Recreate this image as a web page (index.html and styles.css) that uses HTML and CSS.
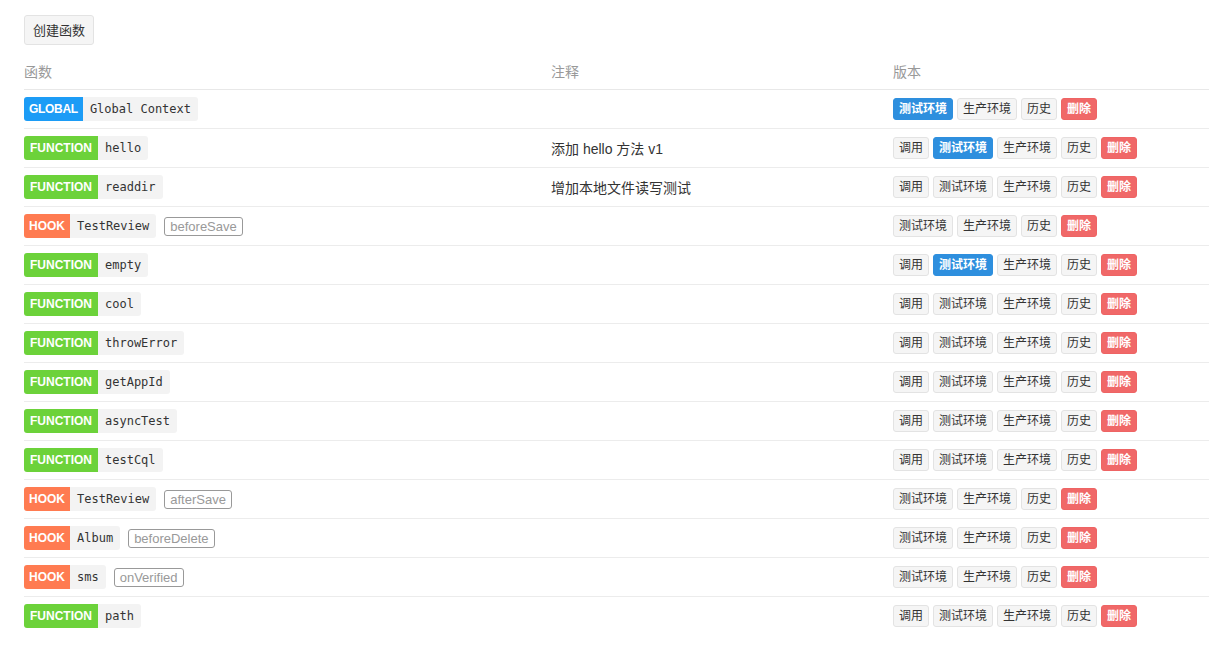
FILE: index.html
```html
<!DOCTYPE html>
<html lang="zh-CN">
<head>
  <meta charset="UTF-8">
  <title>云函数</title>
  <meta name="viewport" content="width=device-width, initial-scale=1">
  <link rel="stylesheet" href="styles.css">
</head>
<body>

  <div class="page">
    <button class="btn btn-create">创建函数</button>

    <table class="func-table">
      <thead>
        <tr>
          <th class="col-name">函数</th>
          <th class="col-note">注释</th>
          <th>版本</th>
        </tr>
      </thead>
      <tbody id="rows"></tbody>
    </table>
  </div>

  <script>
    const funcs = [
      { type: 'GLOBAL', name: 'Global Context', test: true },
      { type: 'FUNCTION', name: 'hello', note: '添加 hello 方法 v1', call: true, test: true },
      { type: 'FUNCTION', name: 'readdir', note: '增加本地文件读写测试', call: true },
      { type: 'HOOK', name: 'TestReview', event: 'beforeSave' },
      { type: 'FUNCTION', name: 'empty', call: true, test: true },
      { type: 'FUNCTION', name: 'cool', call: true },
      { type: 'FUNCTION', name: 'throwError', call: true },
      { type: 'FUNCTION', name: 'getAppId', call: true },
      { type: 'FUNCTION', name: 'asyncTest', call: true },
      { type: 'FUNCTION', name: 'testCql', call: true },
      { type: 'HOOK', name: 'TestReview', event: 'afterSave' },
      { type: 'HOOK', name: 'Album', event: 'beforeDelete' },
      { type: 'HOOK', name: 'sms', event: 'onVerified' },
      { type: 'FUNCTION', name: 'path', call: true }
    ];

    const tbody = document.getElementById('rows');
    funcs.forEach(f => {
      let name = '<span class="tag"><span class="tag-type ' + f.type.toLowerCase() + '">' + f.type + '</span>' +
                 '<code>' + f.name + '</code></span>';
      if (f.event) name += '<span class="event">' + f.event + '</span>';

      let btns = '';
      if (f.call) btns += '<button class="btn btn-sm">调用</button>';
      btns += '<button class="btn btn-sm' + (f.test ? ' btn-primary' : '') + '">测试环境</button>';
      btns += '<button class="btn btn-sm">生产环境</button>';
      btns += '<button class="btn btn-sm">历史</button>';
      btns += '<button class="btn btn-sm btn-danger">删除</button>';

      const tr = document.createElement('tr');
      tr.innerHTML = '<td>' + name + '</td><td>' + (f.note || '') + '</td><td><div class="actions">' + btns + '</div></td>';
      tbody.appendChild(tr);
    });
  </script>

</body>
</html>
```

FILE: styles.css
```css
body { margin: 0; font-family: "Liberation Sans", "Noto Sans CJK SC", sans-serif; font-size: 14px; color: #333; background: #fff; }
.page { padding: 15px 0 0 24px; }

.btn { font-family: inherit; font-size: 13px; color: #333; background: #f5f5f5; border: 1px solid #e3e3e3; border-radius: 3px; cursor: pointer; line-height: 1; }
.btn-create { height: 30px; padding: 0 8px; }

.func-table { width: 100%; border-collapse: collapse; margin-top: 16px; }
.func-table th { text-align: left; font-weight: normal; color: #999; height: 25px; padding: 0 0 3px; vertical-align: top; border-bottom: 1px solid #e8e8e8; }
.func-table td { height: 38px; padding: 0; border-top: 1px solid #ececec; vertical-align: middle; }
.func-table tbody tr:first-child td { border-top: none; }
.col-name { width: 527px; }
.col-note { width: 342px; }

.tag { display: inline-flex; height: 24px; border-radius: 3px; overflow: hidden; vertical-align: middle; }
.tag-type { display: flex; align-items: center; padding: 0 6px; color: #fff; font-weight: bold; font-size: 12px; font-family: "Liberation Sans", sans-serif; }
.tag-type.global { background: #1c9cf6; padding: 0 5px; letter-spacing: -0.3px; }
.tag-type.function { background: #6cd23a; }
.tag-type.hook { background: #ff7b51; padding: 0 5px; }
.tag code { display: flex; align-items: center; padding: 0 7px; background: #f3f3f3; font-family: "DejaVu Sans Mono", monospace; font-size: 12px; color: #333; }

.event { display: inline-flex; align-items: center; box-sizing: border-box; height: 19px; padding: 0 5px; margin-left: 8px; border: 1px solid #999; border-radius: 3px; color: #999; font-size: 13px; vertical-align: middle; }

.actions { display: flex; gap: 4px; }
.btn-sm { height: 22px; padding: 0 5px; font-size: 12px; }
.btn-primary { background: #2e8fde; border-color: #2e8fde; color: #fff; font-weight: bold; }
.btn-danger { background: #f06868; border-color: #ee6464; color: #fff; font-weight: bold; }
```
